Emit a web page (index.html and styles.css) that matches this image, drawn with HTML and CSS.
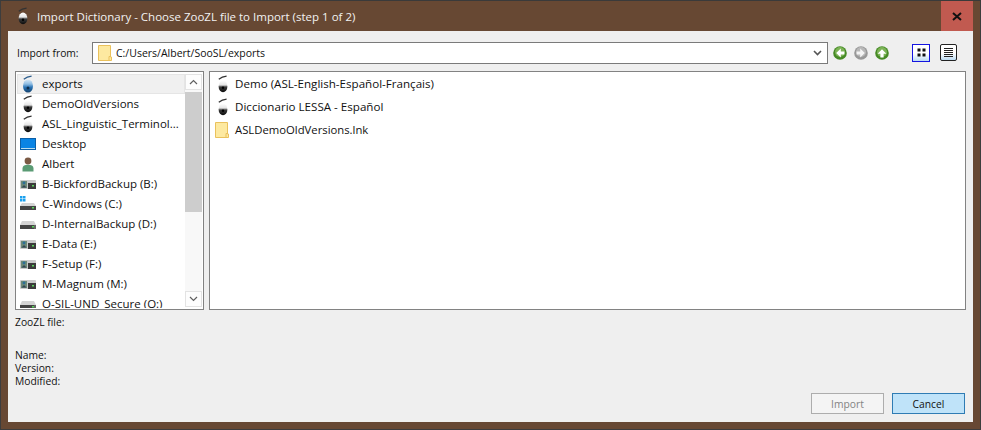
FILE: index.html
```html
<!DOCTYPE html>
<html lang="en">
<head>
<meta charset="utf-8">
<title>Import Dictionary</title>
<link rel="stylesheet" href="styles.css">
</head>
<body>
<svg class="defs" width="0" height="0" aria-hidden="true">
  <defs>
    <linearGradient id="ballg" x1="0" y1="0" x2="0" y2="1">
      <stop offset="0" stop-color="#ffffff"/>
      <stop offset="0.38" stop-color="#e6e6e6"/>
      <stop offset="0.55" stop-color="#3a3a3a"/>
      <stop offset="1" stop-color="#0c0c0c"/>
    </linearGradient>
    <linearGradient id="ballb" x1="0" y1="0" x2="0" y2="1">
      <stop offset="0" stop-color="#d8e9f7"/>
      <stop offset="0.35" stop-color="#8fbde3"/>
      <stop offset="0.6" stop-color="#2a74b5"/>
      <stop offset="1" stop-color="#123f6b"/>
    </linearGradient>
    <symbol id="eye" viewBox="0 0 16 20">
      <path d="M3.8 5.2 Q7 2.6 11.6 2.2" fill="none" stroke="#333" stroke-width="1.2"/>
      <ellipse cx="8" cy="12.4" rx="4.4" ry="5.8" fill="url(#ballg)"/>
      <circle cx="8" cy="13.8" r="1.2" fill="#000"/>
    </symbol>
    <symbol id="eyeblue" viewBox="0 0 16 20">
      <path d="M3.8 5.2 Q7 2.6 11.6 2.2" fill="none" stroke="#2b5c8c" stroke-width="1.2"/>
      <ellipse cx="8" cy="12" rx="5" ry="6.6" fill="url(#ballb)"/>
      <circle cx="8" cy="14" r="1.5" fill="#0e2e4c"/>
    </symbol>
    <symbol id="folder" viewBox="0 0 14 16">
      <path d="M.5 .5H12.5V12H13.5V15.5H.5Z" fill="#fde9a0" stroke="#eac15c"/>
      <path d="M11 15V11.5H13" fill="none" stroke="#eac15c"/>
    </symbol>
    <symbol id="netdrive" viewBox="0 0 16 12">
      <rect x="0" y="2" width="16" height="9" rx="1" fill="#c9c9c9"/>
      <rect x="8" y="5" width="8" height="6" fill="#3b3b3b"/>
      <rect x="12" y="7" width="2" height="1.5" fill="#5fd35f"/>
      <rect x="1" y="3" width="6" height="7" fill="#6d8a78"/>
      <circle cx="4" cy="5" r="1.4" fill="#2d6f96"/>
      <path d="M1.5 9.5L4 7L6.5 9.5Z" fill="#345"/>
    </symbol>
    <symbol id="drive" viewBox="0 0 16 12">
      <path d="M2 3H14L16 7V11H0V7Z" fill="#d4d4d4"/>
      <rect x="0" y="7" width="14" height="4" fill="#444"/>
      <rect x="12" y="8" width="2" height="1.5" fill="#56d456"/>
      <rect x="14" y="7" width="2" height="4" fill="#666"/>
    </symbol>
  </defs>
</svg>

<div class="window">
  <header class="titlebar">
    <svg class="title-icon"><use href="#eye"/></svg>
    <span class="title-text">Import Dictionary - Choose ZooZL file to Import (step 1 of 2)</span>
    <button class="close" type="button" aria-label="Close">
      <svg width="10" height="9" viewBox="0 0 10 9"><path d="M1 1L9 8M9 1L1 8" stroke="#111" stroke-width="2"/></svg>
    </button>
  </header>

  <main class="client">
    <div class="toolbar">
      <label class="from-label">Import from:</label>
      <div class="combo">
        <svg class="combo-folder"><use href="#folder"/></svg>
        <span class="combo-text">C:/Users/Albert/SooSL/exports</span>
        <svg class="combo-arrow" width="9" height="6" viewBox="0 0 9 6"><path d="M1 1L4.5 4.5L8 1" fill="none" stroke="#555" stroke-width="1.6"/></svg>
      </div>
      <div class="navs">
        <svg class="nav" viewBox="0 0 14 14"><circle cx="7" cy="7" r="6.8" fill="#468a25"/><circle cx="7" cy="6" r="5" fill="#7cb356"/><path d="M7.8 2.6L3.2 7L7.8 11.4V8.6H11.4V5.4H7.8Z" fill="#fff"/></svg>
        <svg class="nav" viewBox="0 0 14 14"><circle cx="7" cy="7" r="6.8" fill="#989898"/><circle cx="7" cy="6" r="5" fill="#b8b8b8"/><path d="M6.2 2.6L10.8 7L6.2 11.4V8.6H2.6V5.4H6.2Z" fill="#f4f4f4"/></svg>
        <svg class="nav" viewBox="0 0 14 14"><circle cx="7" cy="7" r="6.8" fill="#468a25"/><circle cx="7" cy="6" r="5" fill="#7cb356"/><path d="M2.6 7.8L7 3.2L11.4 7.8H8.6V11.4H5.4V7.8Z" fill="#fff"/></svg>
      </div>
      <div class="views">
        <button class="view view-on" type="button" aria-label="Icon view">
          <svg width="9" height="9" viewBox="0 0 9 9"><path d="M.5 .5h3v3h-3zM5.5 .5h3v3h-3zM.5 5.5h3v3h-3zM5.5 5.5h3v3h-3z" fill="#111"/></svg>
        </button>
        <button class="view" type="button" aria-label="List view">
          <svg width="9" height="10" viewBox="0 0 9 10"><path d="M0 .5h9M0 2.5h9M0 4.5h9M0 6.5h9M0 8.5h9" stroke="#222" stroke-width="1"/></svg>
        </button>
      </div>
    </div>

    <div class="panes">
      <div class="side">
        <ul class="places">
          <li class="place place-on"><svg class="ic-eye"><use href="#eyeblue"/></svg><span>exports</span></li>
          <li class="place"><svg class="ic-eye"><use href="#eye"/></svg><span>DemoOldVersions</span></li>
          <li class="place"><svg class="ic-eye"><use href="#eye"/></svg><span>ASL_Linguistic_Terminol...</span></li>
          <li class="place">
            <svg class="ic-wide" viewBox="0 0 16 12"><rect x=".5" y=".5" width="15" height="11" fill="#0a84e4" stroke="#0a5fa8"/><rect x="1" y="10" width="14" height="1" fill="#bde"/></svg>
            <span>Desktop</span></li>
          <li class="place">
            <svg class="ic-wide" viewBox="0 0 16 16"><circle cx="8" cy="5" r="3.4" fill="#7b5a44"/><path d="M2.5 15.5V12Q3 8.7 8 8.7T13.5 12V15.5Z" fill="#5a9b74"/></svg>
            <span>Albert</span></li>
          <li class="place"><svg class="ic-wide"><use href="#netdrive"/></svg><span>B-BickfordBackup (B:)</span></li>
          <li class="place">
            <svg class="ic-wide" viewBox="0 0 16 16"><path d="M0 0h2.5v2.5H0zM3 0h2.5v2.5H3zM0 3h2.5v2.5H0zM3 3h2.5v2.5H3z" fill="#1aa0ee"/><path d="M2 7H14L16 10V14H0V10Z" fill="#d4d4d4"/><rect y="10" width="16" height="4" fill="#444"/><rect x="12" y="11" width="2" height="1.5" fill="#56d456"/></svg>
            <span>C-Windows (C:)</span></li>
          <li class="place"><svg class="ic-wide"><use href="#drive"/></svg><span>D-InternalBackup (D:)</span></li>
          <li class="place"><svg class="ic-wide"><use href="#netdrive"/></svg><span>E-Data (E:)</span></li>
          <li class="place"><svg class="ic-wide"><use href="#netdrive"/></svg><span>F-Setup (F:)</span></li>
          <li class="place"><svg class="ic-wide"><use href="#netdrive"/></svg><span>M-Magnum (M:)</span></li>
          <li class="place"><svg class="ic-wide"><use href="#drive"/></svg><span>O-SIL-UND_Secure (O:)</span></li>
        </ul>
        <div class="scrollbar">
          <div class="sb-btn"><svg width="9" height="6" viewBox="0 0 9 6"><path d="M1 5L4.5 1.5L8 5" fill="none" stroke="#606060" stroke-width="1.2"/></svg></div>
          <div class="sb-track"><div class="sb-thumb"></div></div>
          <div class="sb-btn"><svg width="9" height="6" viewBox="0 0 9 6"><path d="M1 1L4.5 4.5L8 1" fill="none" stroke="#606060" stroke-width="1.2"/></svg></div>
        </div>
      </div>
      <ul class="files">
        <li class="file"><svg class="ic-eye"><use href="#eye"/></svg><span>Demo (ASL-English-Español-Français)</span></li>
        <li class="file"><svg class="ic-eye"><use href="#eye"/></svg><span>Diccionario LESSA - Español</span></li>
        <li class="file"><svg class="ic-folder"><use href="#folder"/></svg><span class="lnk">ASLDemoOldVersions.lnk</span></li>
      </ul>
    </div>

    <div class="info">
      <p class="info-file">ZooZL file:</p>
      <p>Name:</p>
      <p>Version:</p>
      <p>Modified:</p>
    </div>

    <div class="actions">
      <button class="btn btn-off" type="button" disabled>Import</button>
      <button class="btn btn-main" type="button">Cancel</button>
    </div>
  </main>
</div>
</body>
</html>
```
FILE: styles.css
```css
* { box-sizing: border-box; }
html, body { margin: 0; padding: 0; }
body {
  width: 981px;
  height: 430px;
  overflow: hidden;
  font-family: "Open Sans", "Noto Sans", sans-serif;
  font-size: 10.3px;
  color: #111;
  background: #674833;
}
.defs { position: absolute; }
ul { list-style: none; margin: 0; padding: 0; }
p { margin: 0; }
button { font: inherit; padding: 0; }

.window {
  width: 981px;
  height: 430px;
  display: flex;
  flex-direction: column;
  background: #674833;
  border: 1px solid #3d3d3d;
  border-top-color: #3a3a3a;
  padding: 0 7px 7px;
}
.titlebar {
  height: 30px;
  flex: none;
  display: flex;
  align-items: center;
  color: #f2f2f2;
  font-size: 11.5px;
}
.title-icon { width: 16px; height: 20px; margin: 0 6px 0 7px; flex: none; }
.title-text { flex: 1; }
.close {
  width: 32px;
  height: 30px;
  background: #c15a50;
  border: 0;
  display: flex;
  align-items: center;
  justify-content: center;
}

.client {
  flex: 1;
  min-height: 0;
  background: #efefef;
  padding: 10px 7px 8px;
  display: flex;
  flex-direction: column;
}
.toolbar {
  height: 23px;
  flex: none;
  display: flex;
  align-items: center;
}
.from-label { width: 75px; padding-left: 2px; flex: none; }
.combo {
  width: 736px;
  height: 22px;
  flex: none;
  margin-left: 2px;
  background: #fff;
  border: 1px solid #7a7a7a;
  display: flex;
  align-items: center;
  padding: 0 5px;
}
.combo-folder { width: 14px; height: 16px; flex: none; }
.combo-text { flex: 1; margin-left: 4px; font-size: 10.5px; }
.combo-arrow { flex: none; }
.navs { display: flex; gap: 7px; margin-left: 5px; flex: none; }
.nav { width: 14px; height: 14px; display: block; }
.views { display: flex; gap: 10px; margin-left: 23px; flex: none; align-items: center; }
.view {
  width: 17px;
  height: 17px;
  border: 1px solid #222;
  border-radius: 2px;
  background: linear-gradient(#fff 55%, #bcdcf4);
  display: flex;
  align-items: center;
  justify-content: center;
}
.view-on { width: 18px; height: 18px; border: 1px solid #1414e0; border-radius: 0; }

.panes {
  margin-top: 7px;
  height: 239px;
  flex: none;
  display: flex;
  gap: 5px;
}
.side {
  width: 189px;
  flex: none;
  background: #fff;
  border: 1px solid #828282;
  display: flex;
  padding: 1px;
  overflow: hidden;
}
.places { flex: 1; min-width: 0; padding-top: 1px; overflow: hidden; font-size: 11.5px; }
.place {
  height: 20px;
  display: flex;
  align-items: center;
  border: 1px solid transparent;
  white-space: nowrap;
}
.place span { padding-bottom: 2px; }
.place-on { background: #f0f0f0; border-color: #e5e5e5; }
.place .ic-eye { margin: 0 6px 0 2px; }
.place .ic-wide { margin: 0 6px 0 2px; }
.ic-eye { width: 16px; height: 20px; flex: none; }
.ic-wide { width: 16px; height: 16px; flex: none; }
.ic-folder { width: 14px; height: 16px; flex: none; margin-right: 2px; }
.scrollbar {
  width: 17px;
  flex: none;
  display: flex;
  flex-direction: column;
  padding: 1px 0;
}
.sb-btn {
  height: 16px;
  flex: none;
  display: flex;
  align-items: center;
  justify-content: center;
  background: #fdfdfd;
  border: 1px solid #e3e3e3;
}
.sb-track { flex: 1; background: #f8f8f8; padding-top: 2px; }
.sb-thumb { height: 120px; background: #cdcdcd; }

.files {
  flex: 1;
  background: #fff;
  border: 1px solid #828282;
  padding: 0 0 0 5px;
  font-size: 11.6px;
}
.file {
  height: 23px;
  display: flex;
  align-items: center;
  gap: 4px;
}
.lnk { font-size: 11.3px; }

.info { margin-top: 6px; line-height: 13px; flex: none; }
.info-file { margin-bottom: 20px; }

.actions {
  flex: 1;
  display: flex;
  justify-content: flex-end;
  align-items: flex-end;
  gap: 8px;
  padding-right: 1px;
}
.btn { width: 73px; height: 21px; }
.btn-off { background: #f4f4f4; border: 1px solid #adadad; color: #838383; }
.btn-main { background: #bfe3f9; border: 1px solid #2f7cb4; color: #111; }
```
